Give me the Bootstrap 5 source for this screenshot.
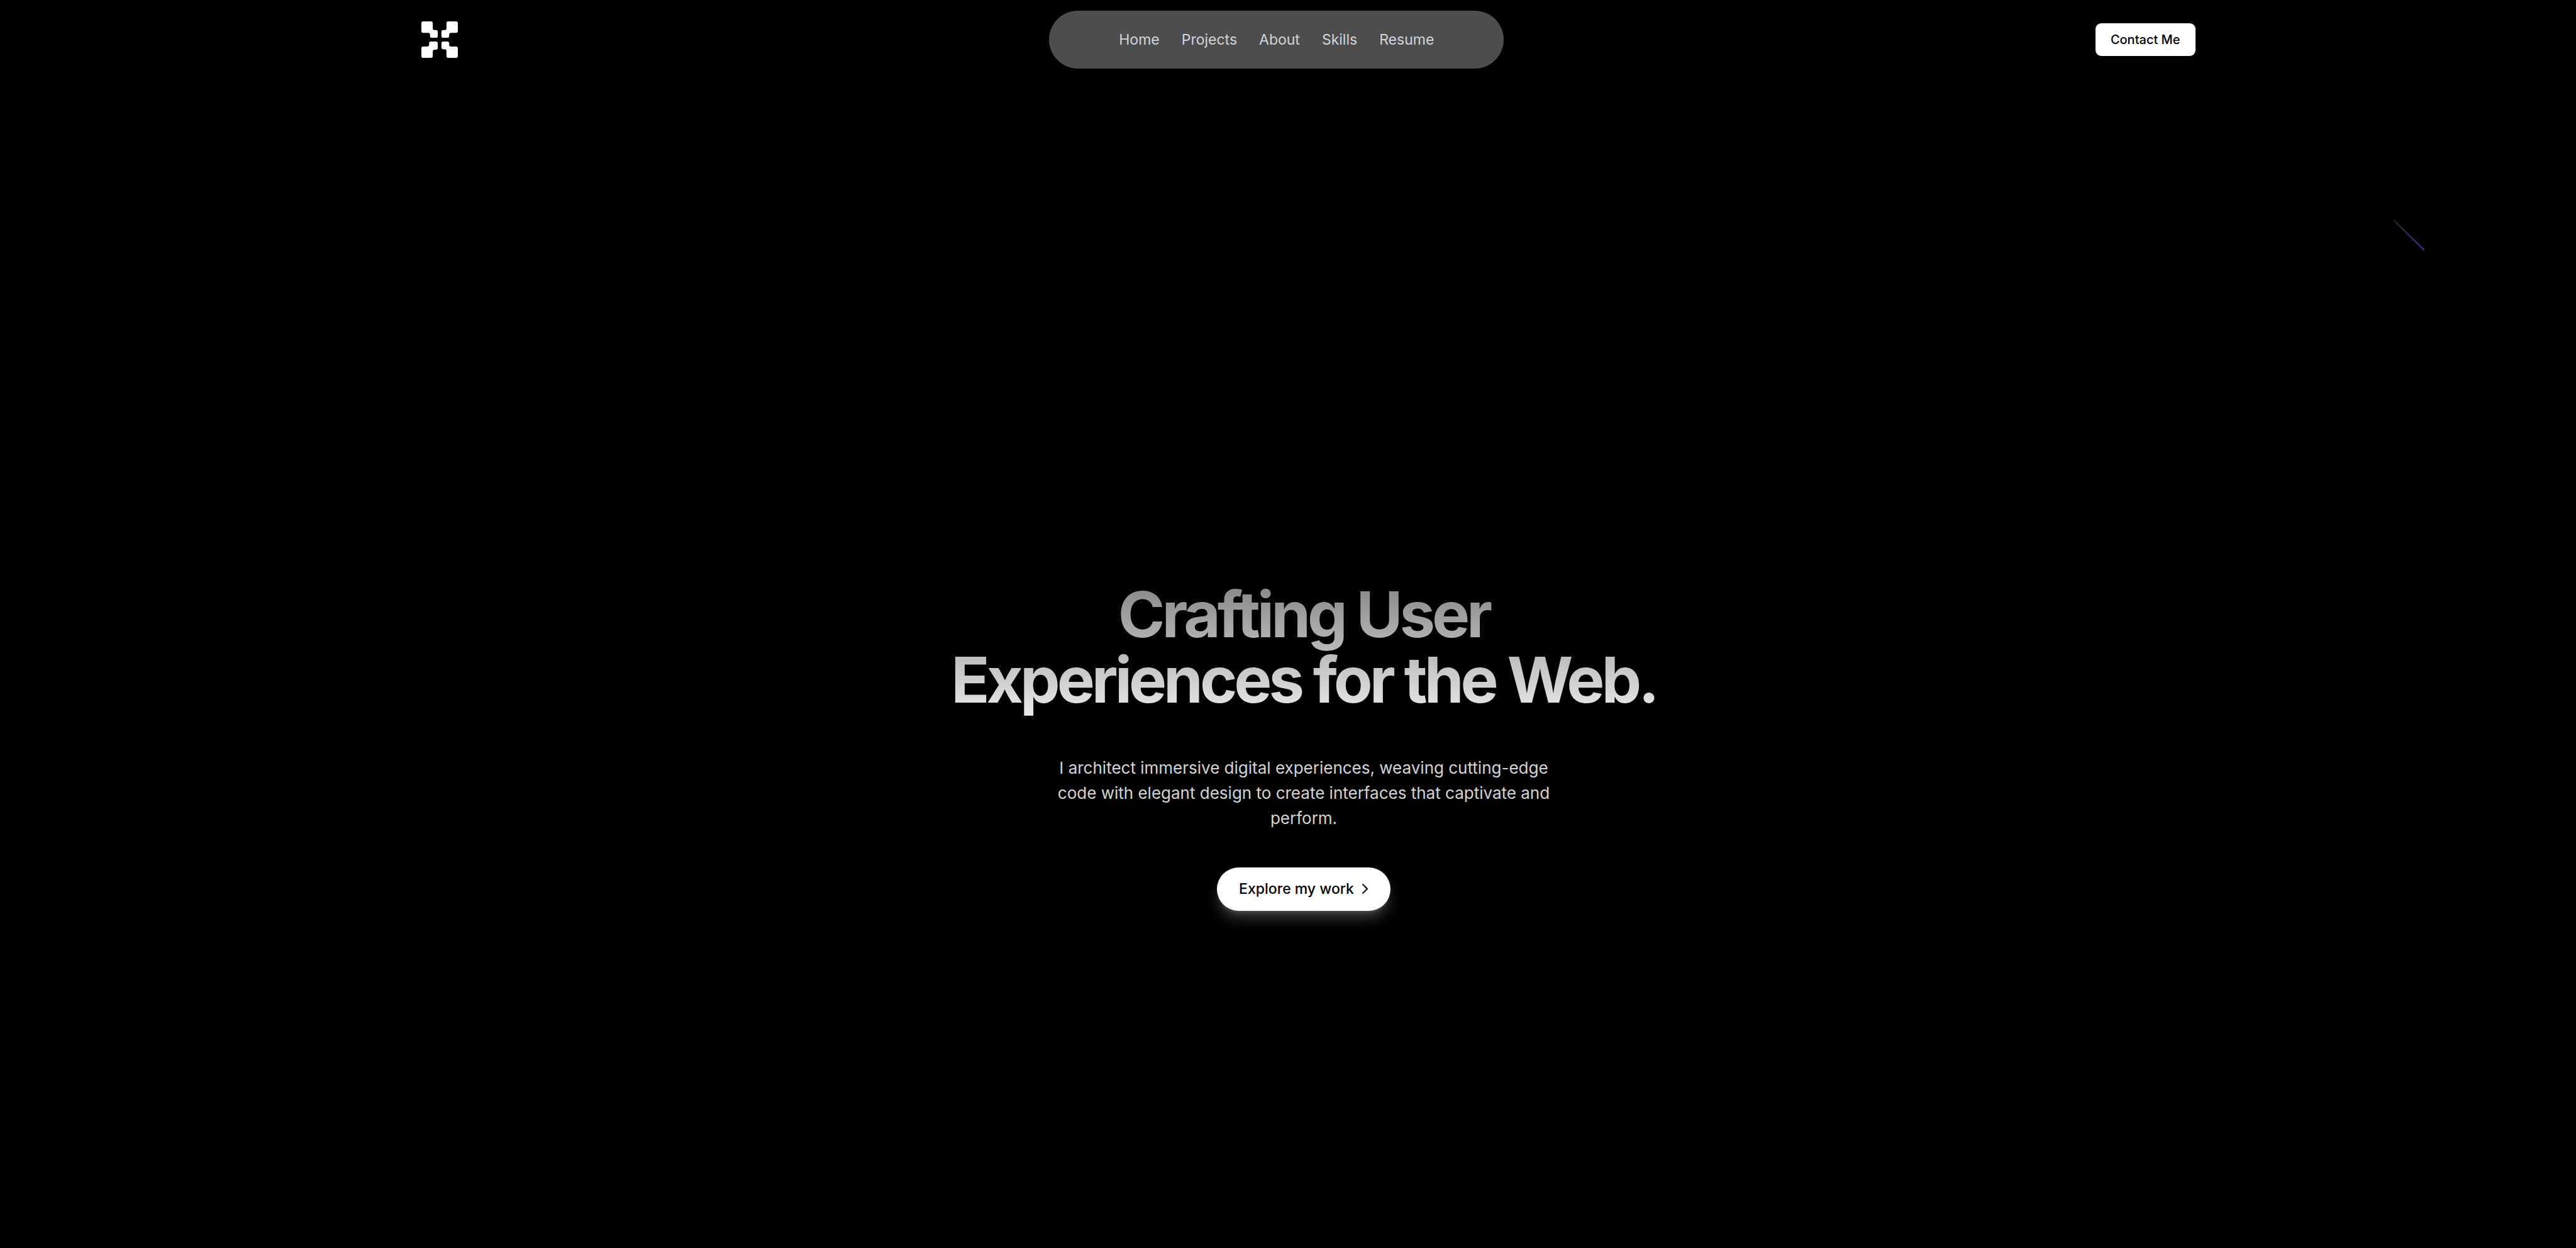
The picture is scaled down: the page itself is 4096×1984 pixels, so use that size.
<!DOCTYPE html>
<html lang="en">
<head>
<meta charset="utf-8">
<meta name="viewport" content="width=device-width, initial-scale=1">
<title>Portfolio</title>
<link rel="stylesheet" href="https://cdn.jsdelivr.net/npm/bootstrap@5.3.0/dist/css/bootstrap.min.css">
<style>
  body { background: #000; color: #d4d4d4; font-family: Inter, sans-serif; }
  .page { min-height: 100vh; }
  .topbar { padding: 17px 14.78% 17px 16.35%; }
  .logo svg { width: 58px; height: 58px; }
  .pill { height: 92px; width: 723px; gap: 35px; border-radius: 46px; background: #4d4d4d; }
  .pill .nav-link { padding: 0; color: #d1d5db; font-size: 23px; line-height: 35px; }
  .pill .nav-link:hover { color: #fff; }
  .btn-contact { --bs-btn-padding-x: 24px; --bs-btn-padding-y: 11px; --bs-btn-border-width: 0; --bs-btn-font-size: 20px; --bs-btn-line-height: 30px; --bs-btn-border-radius: 9px; --bs-btn-color: #000; --bs-btn-font-weight: 500; }
  .hero { padding: 40.2vh 0 80px 50px; }
  .headline { font-size: 101px; line-height: 104px; font-weight: 700; letter-spacing: -0.05em; padding-bottom: 8px; background: linear-gradient(#858585, #ebebeb); -webkit-background-clip: text; background-clip: text; color: transparent; }
  .intro { max-width: 820px; margin: 61px 0 58px; font-size: 26px; line-height: 40px; }
  .btn-explore { --bs-btn-padding-x: 35px; --bs-btn-padding-y: 17px; --bs-btn-border-width: 0; --bs-btn-font-size: 23px; --bs-btn-line-height: 35px; --bs-btn-color: #000; --bs-btn-font-weight: 500; box-shadow: 0 14px 22px -4px rgba(255, 255, 255, .25), 0 6px 9px -6px rgba(255, 255, 255, .25); gap: 12px; }
  .btn-explore svg { width: 11px; height: 18px; }
  .meteor { left: 92.9%; top: 17.6%; width: 50px; height: 49px; }
</style>
<script defer src="https://cdn.jsdelivr.net/npm/bootstrap@5.3.0/dist/js/bootstrap.bundle.min.js"></script>
</head>
<body>
<div class="page position-relative overflow-hidden">
  <header class="topbar d-flex align-items-center justify-content-between">
    <a class="logo d-flex" href="#" aria-label="Home page">
      <svg viewBox="0 0 80 80" fill="#fff" aria-hidden="true">
        <path id="arm" d="M4 0H21Q25 0 25 4V15Q25 19 29 19H32Q36 19 36 23V32Q36 36 32 36H23Q19 36 19 32V29Q19 25 15 25H4Q0 25 0 21V4Q0 0 4 0Z"/>
        <use href="#arm" transform="translate(80 0) scale(-1 1)"/>
        <path d="M21 44H32Q36 44 36 48V58Q36 62 32 62H29Q25 62 25 66V76Q25 80 21 80H4Q0 80 0 76V59Q0 55 4 55H13Q17 55 17 51V48Q17 44 21 44Z"/>
        <path d="M48 44H57Q61 44 61 48V51Q61 55 65 55H76Q80 55 80 59V76Q80 80 76 80H59Q55 80 55 76V65Q55 61 51 61H48Q44 61 44 57V48Q44 44 48 44Z"/>
      </svg>
    </a>
    <nav class="pill nav d-flex align-items-center justify-content-center" aria-label="Main">
      <a class="nav-link" href="#">Home</a>
      <a class="nav-link" href="#projects">Projects</a>
      <a class="nav-link" href="#about">About</a>
      <a class="nav-link" href="#skills">Skills</a>
      <a class="nav-link" href="#resume">Resume</a>
    </nav>
    <button class="btn btn-light btn-contact bg-white" type="button">Contact Me</button>
  </header>

  <main class="hero d-flex flex-column align-items-center text-center">
    <h1 class="headline mb-0">Crafting User<br>Experiences for the Web.</h1>
    <p class="intro">I architect immersive digital experiences, weaving cutting-edge code with elegant design to create interfaces that captivate and perform.</p>
    <button class="btn btn-light btn-explore bg-white rounded-pill d-inline-flex align-items-center" type="button">
      Explore my work
      <svg viewBox="0 0 11 18" fill="none" stroke="#000" stroke-width="2" stroke-linecap="round" stroke-linejoin="round" aria-hidden="true"><path d="M2 2L9 9L2 16"/></svg>
    </button>
  </main>

  <svg class="meteor position-absolute" viewBox="0 0 50 49" aria-hidden="true">
    <defs>
      <linearGradient id="tail" gradientUnits="userSpaceOnUse" x1="1" y1="1" x2="49" y2="48">
        <stop offset="0" stop-color="#2a3048"/><stop offset=".5" stop-color="#423482"/><stop offset="1" stop-color="#6d30c4"/>
      </linearGradient>
    </defs>
    <path d="M1 1L49 48" stroke="url(#tail)" stroke-width="1.7"/>
    <circle cx="48.5" cy="47.5" r="1" fill="#6a35b8"/>
  </svg>
</div>
</body>
</html>
